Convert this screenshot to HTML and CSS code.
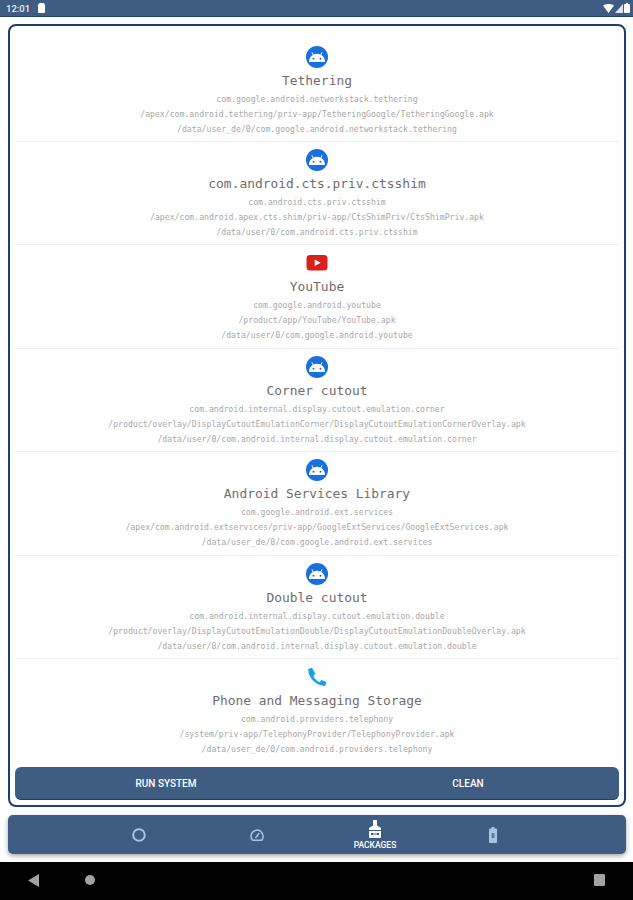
FILE: index.html
```html
<!DOCTYPE html>
<html lang="en">
<head>
  <meta charset="UTF-8">
  <title>Packages</title>
  <link rel="stylesheet" href="styles.css">
</head>
<body>

<svg class="defs" width="0" height="0">
  <symbol id="ico-android" viewBox="0 0 22 22">
    <circle cx="11" cy="11" r="11" fill="#1a6fe0"/>
    <path d="M3 16c0-3.200 1.400-5.700 3.700-7.100L5.400 6.500l.7-.4 1.400 2.400c1.100-.5 2.300-.7 3.500-.7s2.400.2 3.500.7l1.400-2.400.7.4-1.300 2.400c2.300 1.400 3.700 3.900 3.700 7.100z" fill="#fff"/>
    <circle cx="7.500" cy="12.800" r="1" fill="#1a6fe0"/>
    <circle cx="14.500" cy="12.800" r="1" fill="#1a6fe0"/>
  </symbol>
</svg>

<div class="statusbar">
  <span class="time">12:01</span>
  <svg class="sd" width="7" height="10" viewBox="0 0 7 10"><path d="M1.500 0h4L7 1.500V9a1 1 0 0 1-1 1H1a1 1 0 0 1-1-1V1.500z" fill="#fff"/></svg>
  <span class="spacer"></span>
  <svg width="11" height="9" viewBox="0 0 11 9"><path d="M0 1.500C3-.5 8-.5 11 1.500L5.500 9z" fill="#fff"/></svg>
  <svg width="8" height="9" viewBox="0 0 8 9"><path d="M8 0v9H0z" fill="#dfe5ee"/></svg>
  <svg width="6" height="10" viewBox="0 0 6 10"><path d="M2 0h2v1h1a1 1 0 0 1 1 1v7a1 1 0 0 1-1 1H1a1 1 0 0 1-1-1V2a1 1 0 0 1 1-1h1z" fill="#fff"/></svg>
</div>

<div class="main">
  <div class="card">
    <div class="lista">
      <div class="fila">
        <svg class="ico"><use href="#ico-android"/></svg>
        <div class="nombre">Tethering</div>
        <div class="dato">com.google.android.networkstack.tethering</div>
        <div class="dato">/apex/com.android.tethering/priv-app/TetheringGoogle/TetheringGoogle.apk</div>
        <div class="dato">/data/user_de/0/com.google.android.networkstack.tethering</div>
      </div>
      <div class="fila">
        <svg class="ico"><use href="#ico-android"/></svg>
        <div class="nombre">com.android.cts.priv.ctsshim</div>
        <div class="dato">com.android.cts.priv.ctsshim</div>
        <div class="dato">/apex/com.android.apex.cts.shim/priv-app/CtsShimPriv/CtsShimPriv.apk</div>
        <div class="dato">/data/user/0/com.android.cts.priv.ctsshim</div>
      </div>
      <div class="fila">
        <svg class="ico" viewBox="0 0 22 22">
          <rect x="0.500" y="3" width="21" height="15.500" rx="3.500" fill="#d8201c"/>
          <path d="M8.700 7.500l6 3.250-6 3.250z" fill="#fff"/>
        </svg>
        <div class="nombre">YouTube</div>
        <div class="dato">com.google.android.youtube</div>
        <div class="dato">/product/app/YouTube/YouTube.apk</div>
        <div class="dato">/data/user/0/com.google.android.youtube</div>
      </div>
      <div class="fila">
        <svg class="ico"><use href="#ico-android"/></svg>
        <div class="nombre">Corner cutout</div>
        <div class="dato">com.android.internal.display.cutout.emulation.corner</div>
        <div class="dato">/product/overlay/DisplayCutoutEmulationCorner/DisplayCutoutEmulationCornerOverlay.apk</div>
        <div class="dato">/data/user/0/com.android.internal.display.cutout.emulation.corner</div>
      </div>
      <div class="fila">
        <svg class="ico"><use href="#ico-android"/></svg>
        <div class="nombre">Android Services Library</div>
        <div class="dato">com.google.android.ext.services</div>
        <div class="dato">/apex/com.android.extservices/priv-app/GoogleExtServices/GoogleExtServices.apk</div>
        <div class="dato">/data/user_de/0/com.google.android.ext.services</div>
      </div>
      <div class="fila">
        <svg class="ico"><use href="#ico-android"/></svg>
        <div class="nombre">Double cutout</div>
        <div class="dato">com.android.internal.display.cutout.emulation.double</div>
        <div class="dato">/product/overlay/DisplayCutoutEmulationDouble/DisplayCutoutEmulationDoubleOverlay.apk</div>
        <div class="dato">/data/user/0/com.android.internal.display.cutout.emulation.double</div>
      </div>
      <div class="fila">
        <svg class="ico" viewBox="0 0 24 24">
          <path d="M6.500 1.800L2.300 3.200C2.600 13 10.500 21.300 21 21.800l1.300-4.300-5.300-2.200-2.400 2.300c-2.900-1.400-5.200-3.700-6.600-6.600l2.300-2.500z" fill="#1aa0ea"/>
        </svg>
        <div class="nombre">Phone and Messaging Storage</div>
        <div class="dato">com.android.providers.telephony</div>
        <div class="dato">/system/priv-app/TelephonyProvider/TelephonyProvider.apk</div>
        <div class="dato">/data/user_de/0/com.android.providers.telephony</div>
      </div>
    </div>
    <div class="acciones">
      <button class="btn">RUN SYSTEM</button>
      <button class="btn">CLEAN</button>
    </div>
  </div>

  <div class="tabs">
    <div class="tab">
      <svg width="16" height="16" viewBox="0 0 16 16"><circle cx="8" cy="8" r="5.800" fill="none" stroke="#a9c3e4" stroke-width="2"/></svg>
    </div>
    <div class="tab">
      <svg width="16" height="16" viewBox="0 0 16 16">
        <path d="M3.600 13.200A6 6 0 1 1 14 9.500c0 1.400-.4 2.700-1.200 3.700z" fill="none" stroke="#a9c3e4" stroke-width="1.500"/>
        <path d="M6.500 11l3.800-5" stroke="#a9c3e4" stroke-width="1.500"/>
      </svg>
    </div>
    <div class="tab activo">
      <svg width="16" height="18" viewBox="0 0 16 18">
        <path d="M6 0h4v5.500l4 2.500v2H2V8l4-2.500zM2 11h12v7H2z" fill="#fff"/>
        <path d="M4 13h2.500v2H4zM7.500 13h1v2h-1zM9.500 13H12v2H9.500z" fill="#3f5c83"/>
      </svg>
      <span>PACKAGES</span>
    </div>
    <div class="tab">
      <svg width="8" height="16" viewBox="0 0 8 16">
        <path d="M2.500 0h3v1.500H7a1 1 0 0 1 1 1V15a1 1 0 0 1-1 1H1a1 1 0 0 1-1-1V2.500a1 1 0 0 1 1-1h1.500z" fill="#a9c3e4"/>
        <rect x="2.500" y="6" width="3" height="5" fill="#5f7da5"/>
      </svg>
    </div>
  </div>
</div>

<div class="navbar">
  <svg class="nav-back" width="11" height="13" viewBox="0 0 11 13"><path d="M11 0v13L0 6.500z" fill="#a3a3a3"/></svg>
  <span class="nav-home"></span>
  <span class="spacer"></span>
  <span class="nav-recent"></span>
</div>

</body>
</html>
```

FILE: styles.css
```css
html, body { margin: 0; padding: 0; }
body { width: 633px; height: 900px; display: flex; flex-direction: column; background: #fff; font-family: Roboto, sans-serif; overflow: hidden; }
.defs { position: absolute; }
.spacer { flex: 1; }

.statusbar { height: 16px; flex: none; display: flex; align-items: center; gap: 1px; padding: 0 3px 0 6px; background: #3f5c83; border-bottom: 1px solid #1f4272; color: #e8edf4; font-size: 9.500px; font-weight: 500; }
.time { margin-right: 7px; }

.main { flex: 1; display: flex; flex-direction: column; gap: 8px; padding: 7px 7px 8px 8px; background: #fff; }

.card { height: 783px; box-sizing: border-box; flex: none; display: flex; flex-direction: column; border: 2px solid #1c3f70; border-radius: 8px; padding: 0 5px 5px; }
.lista { flex: 1; padding-top: 12.500px; }
.fila { height: 103.430px; box-sizing: border-box; padding-top: 7px; display: flex; flex-direction: column; align-items: center; border-bottom: 1px solid #eeeeee; font-family: "DejaVu Sans Mono", monospace; }
.fila:last-child { border-bottom: none; }
.ico { width: 22px; height: 22px; flex: none; }
.nombre { margin-top: 4px; height: 18px; line-height: 18px; font-size: 12.900px; color: #6e6e6e; white-space: nowrap; }
.dato { height: 15px; line-height: 15px; font-size: 8.170px; color: #a8a8a8; white-space: nowrap; }
.nombre + .dato { margin-top: 2px; }

.acciones { height: 33px; flex: none; display: flex; box-sizing: border-box; background: #3f5c83; border-bottom: 1px solid #1c3f70; border-radius: 6px; }
.btn { flex: 1; border: none; background: none; color: #fff; font-family: Roboto, sans-serif; font-size: 10px; font-weight: 500; padding: 0; }

.tabs { height: 39px; flex: none; display: flex; justify-content: center; padding-right: 2px; background: #3f5c83; border-radius: 5px; box-shadow: 0 2px 5px rgba(0, 0, 0, 0.35); }
.tab { width: 118px; display: flex; flex-direction: column; align-items: center; justify-content: center; color: #fff; font-size: 8.500px; font-weight: 500; }
.tab span { margin-top: 2px; }

.navbar { height: 38px; flex: none; display: flex; align-items: center; background: #000; padding: 0 28px 2px 28px; box-sizing: border-box; }
.nav-home { width: 10px; height: 10px; border-radius: 50%; background: #a3a3a3; margin-left: 46px; }
.nav-recent { width: 11px; height: 12px; border-radius: 1px; background: #a3a3a3; }
```
